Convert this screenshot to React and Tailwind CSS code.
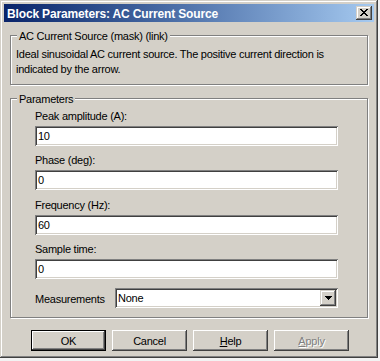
const raised =
  "shadow-[inset_-1px_-1px_0_#404040,inset_1px_1px_0_#ffffff,inset_-2px_-2px_0_#808080]";
const frame =
  "shadow-[inset_-1px_-1px_0_#404040,inset_1px_1px_0_#d4d0c8,inset_-2px_-2px_0_#808080,inset_2px_2px_0_#ffffff]";
const sunken =
  "shadow-[inset_1px_1px_0_#808080,inset_-1px_-1px_0_#ffffff,inset_2px_2px_0_#404040,inset_-2px_-2px_0_#d4d0c8]";

function CloseGlyph() {
  const rows = [
    [0, 2, 6, 2],
    [1, 2, 5, 2],
    [2, 4],
    [3, 2],
    [2, 4],
    [1, 2, 5, 2],
    [0, 2, 6, 2],
  ];
  return (
    <svg width="8" height="7" viewBox="0 0 8 7" shapeRendering="crispEdges">
      {rows.map((r, y) => {
        const out = [];
        for (let i = 0; i < r.length; i += 2) {
          out.push(<rect key={y + "-" + i} x={r[i]} y={y} width={r[i + 1]} height="1" fill="#000" />);
        }
        return out;
      })}
    </svg>
  );
}

function DownGlyph() {
  return (
    <svg width="7" height="4" viewBox="0 0 7 4" shapeRendering="crispEdges">
      <rect x="0" y="0" width="7" height="1" fill="#000" />
      <rect x="1" y="1" width="5" height="1" fill="#000" />
      <rect x="2" y="2" width="3" height="1" fill="#000" />
      <rect x="3" y="3" width="1" height="1" fill="#000" />
    </svg>
  );
}

function Field({ label, value, mt }) {
  return (
    <div className={mt}>
      <div className="leading-[14px] whitespace-nowrap">{label}</div>
      <div className={`mt-[3px] h-[20px] w-[303px] bg-white pl-[3px] leading-[20px] ${sunken}`}>{value}</div>
    </div>
  );
}

export default function App() {
  return (
    <div className="w-[380px] h-[361px] bg-[#f2f2f2] font-['Liberation_Sans',Arial,sans-serif] text-[11px] tracking-[-0.25px] text-black">
      <div className={`w-[378px] h-[358px] bg-[#d4d0c8] p-[4px] flex flex-col ${frame}`}>
        {/* title bar */}
        <div className="h-[18px] flex items-start justify-between bg-gradient-to-r from-[#0a246a] to-[#a6caf0]">
          <span className="pl-[3px] text-white font-bold text-[12px] tracking-[-0.15px] leading-[20px] whitespace-nowrap">
            Block Parameters: AC Current Source
          </span>
          <div className={`mt-[2px] mr-[2px] w-[16px] h-[14px] bg-[#d4d0c8] flex items-center justify-center pb-[1px] ${frame}`}>
            <CloseGlyph />
          </div>
        </div>

        {/* group 1 */}
        <div className="relative mt-[13px] ml-[6px] w-[358px] h-[50px] border border-[#808080] shadow-[inset_1px_1px_0_#ffffff,1px_1px_0_#ffffff] pt-[11px] pl-[5px]">
          <span className="absolute left-[6px] top-[-7px] px-[2px] bg-[#d4d0c8] leading-[14px] whitespace-nowrap">
            AC Current Source (mask) (link)
          </span>
          <p className="leading-[15px] whitespace-nowrap">
            Ideal sinusoidal AC current source. The positive current direction is
            <br />
            indicated by the arrow.
          </p>
        </div>

        {/* group 2 */}
        <div className="relative mt-[13px] ml-[6px] w-[358px] h-[220px] border border-[#808080] shadow-[inset_1px_1px_0_#ffffff,1px_1px_0_#ffffff] pt-[10px] pl-[24px]">
          <span className="absolute left-[6px] top-[-7px] px-[2px] bg-[#d4d0c8] leading-[14px] whitespace-nowrap">
            Parameters
          </span>
          <Field label="Peak amplitude (A):" value="10" mt="" />
          <Field label="Phase (deg):" value="0" mt="mt-[7px]" />
          <Field label="Frequency (Hz):" value="60" mt="mt-[8px]" />
          <Field label="Sample time:" value="0" mt="mt-[7px]" />
          <div className="mt-[9px] h-[20px] flex items-center">
            <div className="w-[80px] leading-[14px] pt-[2px] whitespace-nowrap">Measurements</div>
            <div className={`w-[223px] h-[20px] bg-white flex items-center justify-between pl-[3px] pr-[2px] ${sunken}`}>
              <span className="leading-[16px]">None</span>
              <div className={`w-[16px] h-[16px] bg-[#d4d0c8] flex items-center justify-center ${frame}`}>
                <DownGlyph />
              </div>
            </div>
          </div>
        </div>

        {/* buttons */}
        <div className="mt-[12px] ml-[27px] flex gap-[6px]">
          <div className="w-[75px] h-[21px] border border-black bg-[#d4d0c8]">
            <div className={`w-full h-full flex items-center justify-center leading-[14px] ${raised}`}>OK</div>
          </div>
          <div className={`w-[75px] h-[21px] bg-[#d4d0c8] flex items-center justify-center leading-[14px] ${raised}`}>
            Cancel
          </div>
          <div className={`w-[75px] h-[21px] bg-[#d4d0c8] flex items-center justify-center leading-[14px] ${raised}`}>
            <span><span className="underline">H</span>elp</span>
          </div>
          <div className={`w-[75px] h-[21px] bg-[#d4d0c8] flex items-center justify-center leading-[14px] text-[#808080] [text-shadow:1px_1px_0_#ffffff] ${raised}`}>
            <span><span className="underline">A</span>pply</span>
          </div>
        </div>
      </div>
    </div>
  );
}
